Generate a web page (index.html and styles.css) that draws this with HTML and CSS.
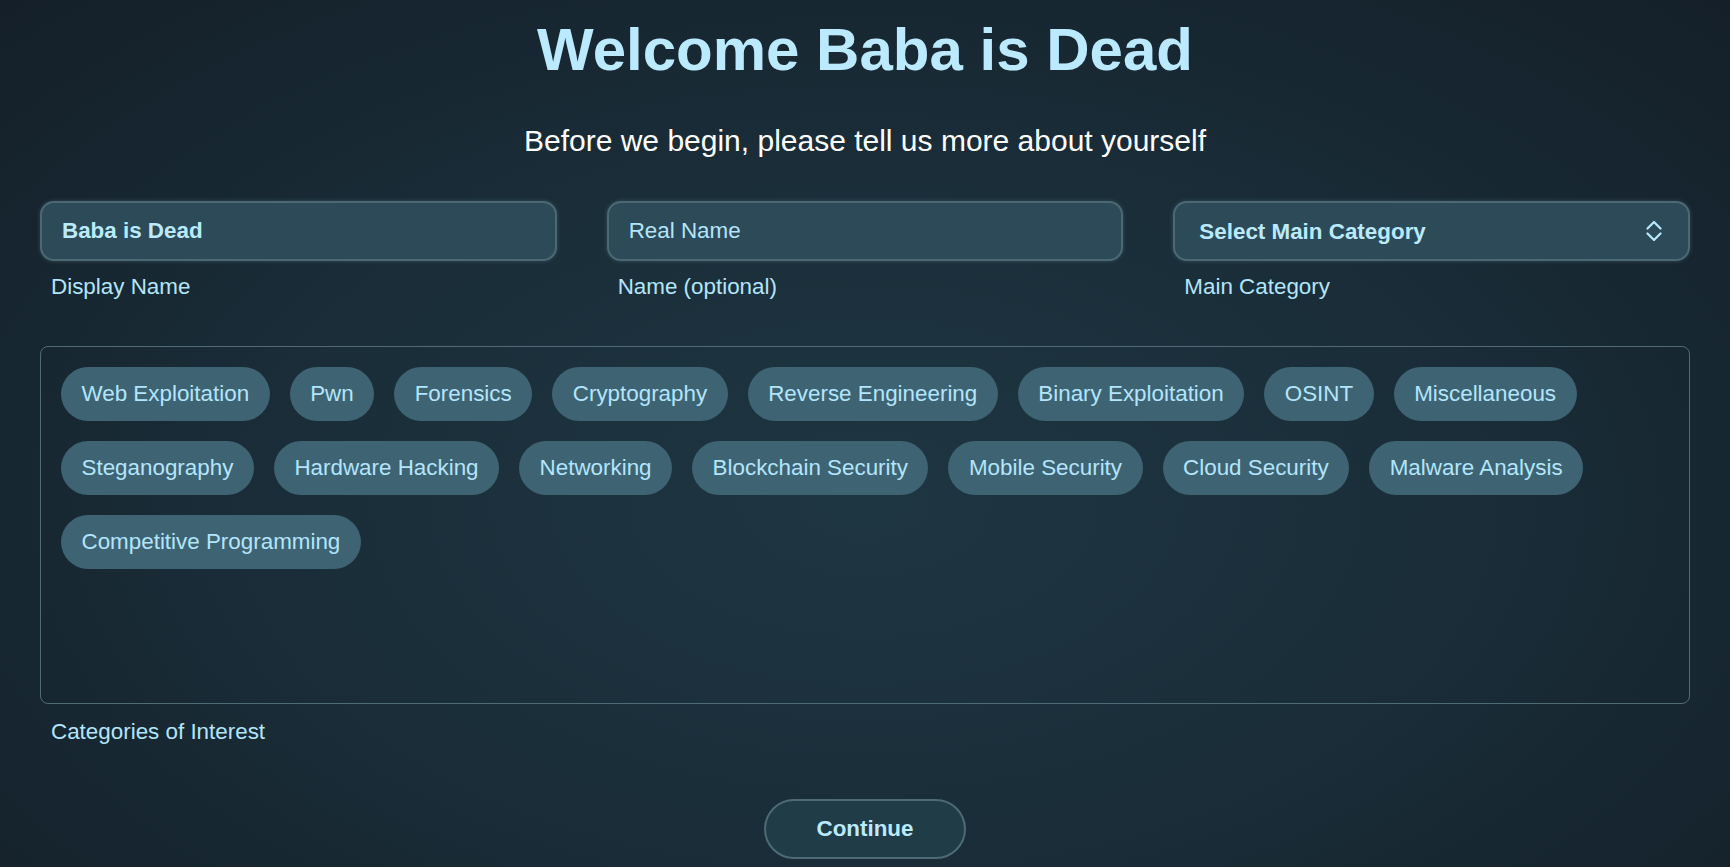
FILE: index.html
```html
<!DOCTYPE html>
<html lang="en">
<head>
    <meta charset="UTF-8">
    <meta name="viewport" content="width=device-width, initial-scale=1.0">
    <title>Welcome</title>
    <link rel="stylesheet" href="styles.css">
</head>
<body>
    <div class="page">
        <h1 class="title">Welcome Baba is Dead</h1>
        <p class="subtitle">Before we begin, please tell us more about yourself</p>

        <div class="fields">
            <div class="field">
                <input type="text" class="field-input" id="display-name" value="Baba is Dead">
                <label for="display-name" class="field-label">Display Name</label>
            </div>
            <div class="field">
                <input type="text" class="field-input" id="real-name" placeholder="Real Name">
                <label for="real-name" class="field-label">Name (optional)</label>
            </div>
            <div class="field">
                <div class="select-wrap">
                    <select class="field-input field-select" id="main-category">
                        <option>Select Main Category</option>
                        <option>Web Exploitation</option>
                        <option>Pwn</option>
                        <option>Forensics</option>
                        <option>Cryptography</option>
                    </select>
                    <svg class="select-arrow" width="16" height="24" viewBox="0 0 16 24">
                        <path d="M1.5 9.5 L8 3 L14.5 9.5" fill="none" stroke="#b9e9ff" stroke-width="2.2" stroke-linecap="round" stroke-linejoin="round"/>
                        <path d="M1.5 14.5 L8 21 L14.5 14.5" fill="none" stroke="#b9e9ff" stroke-width="2.2" stroke-linecap="round" stroke-linejoin="round"/>
                    </svg>
                </div>
                <label for="main-category" class="field-label">Main Category</label>
            </div>
        </div>

        <div class="interests">
            <button type="button" class="tag">Web Exploitation</button>
            <button type="button" class="tag">Pwn</button>
            <button type="button" class="tag">Forensics</button>
            <button type="button" class="tag">Cryptography</button>
            <button type="button" class="tag">Reverse Engineering</button>
            <button type="button" class="tag">Binary Exploitation</button>
            <button type="button" class="tag">OSINT</button>
            <button type="button" class="tag">Miscellaneous</button>
            <button type="button" class="tag">Steganography</button>
            <button type="button" class="tag">Hardware Hacking</button>
            <button type="button" class="tag">Networking</button>
            <button type="button" class="tag">Blockchain Security</button>
            <button type="button" class="tag">Mobile Security</button>
            <button type="button" class="tag">Cloud Security</button>
            <button type="button" class="tag">Malware Analysis</button>
            <button type="button" class="tag">Competitive Programming</button>
        </div>
        <div class="field-label interests-label">Categories of Interest</div>

        <div class="actions">
            <button type="button" class="continue-btn">Continue</button>
        </div>
    </div>
</body>
</html>
```

FILE: styles.css
```css
html, body { margin: 0; }
body {
    min-height: 100vh;
    font-family: "Liberation Sans", Arial, sans-serif;
    background: radial-gradient(ellipse at 50% 58%, #1e3642 0%, #1a2e39 45%, #141f29 100%);
    color: #b3e5fc;
}
.page { padding: 15px 40px 0; }

.title { margin: 0; font-size: 60px; font-weight: bold; color: #bbeaff; text-align: center; }
.subtitle { margin: 40px 0 0; font-size: 30px; color: #ffffff; text-align: center; }

.fields { display: grid; grid-template-columns: repeat(3, 1fr); gap: 50px; margin-top: 43px; }
.field { display: flex; flex-direction: column; }
.field-input {
    box-sizing: border-box;
    width: 100%;
    height: 60px;
    padding: 0 20px;
    border: 2px solid #4b6873;
    border-radius: 14px;
    background: #2c4a58;
    box-shadow: 0 0 4px rgba(110, 150, 160, 0.35);
    font-family: inherit;
    font-size: 22.4px;
    font-weight: bold;
    color: #bbeaff;
    outline: none;
}
.field-input::placeholder { color: #b3e5fc; font-weight: normal; opacity: 1; }
.select-wrap { position: relative; }
.field-select { appearance: none; -webkit-appearance: none; padding-left: 24px; cursor: pointer; }
.select-arrow { position: absolute; right: 28px; top: 18px; pointer-events: none; }
.field-label { display: block; margin-top: 13px; padding-left: 11px; font-size: 22.4px; color: #b3e5fc; }
.interests-label { margin-top: 15px; }

.interests {
    box-sizing: border-box;
    height: 358px;
    margin-top: 46px;
    padding: 20px;
    border: 1.5px solid #4f6b76;
    border-radius: 8px;
    display: flex;
    flex-wrap: wrap;
    align-content: flex-start;
    gap: 20px;
}
.tag {
    padding: 14px 20.5px;
    border: none;
    border-radius: 30px;
    background: #3e6373;
    font-family: inherit;
    font-size: 22.4px;
    line-height: 26px;
    color: #b3e5fc;
    cursor: pointer;
}

.actions { display: flex; justify-content: center; margin-top: 54px; }
.continue-btn {
    padding: 15px 50px;
    border: 2px solid #4d6a75;
    border-radius: 30px;
    background: #1f3c47;
    font-family: inherit;
    font-size: 22.4px;
    font-weight: bold;
    line-height: 26px;
    color: #bbeaff;
    cursor: pointer;
}
```
